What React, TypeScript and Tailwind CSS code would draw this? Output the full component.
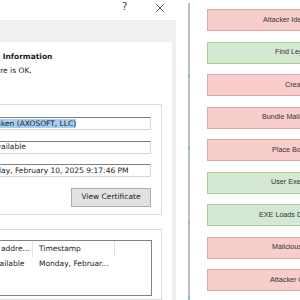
import React from "react";

const boxes = [
  { label: "Attacker Identifies Target", color: "red", pl: "pl-[55px]" },
  { label: "Find Legitimate Signed EXE", color: "green", pl: "pl-[67px]" },
  { label: "Create Malicious DLL", color: "red", pl: "pl-[77px]" },
  { label: "Bundle Malicious DLL with EXE", color: "red", pl: "pl-[54px]" },
  { label: "Place Both Files Together", color: "red", pl: "pl-[64px]" },
  { label: "User Executes EXE", color: "green", pl: "pl-[63px]" },
  { label: "EXE Loads DLL (Sideloading)", color: "green", pl: "pl-[51px]" },
  { label: "Malicious Code Executes", color: "red", pl: "pl-[64px]" },
  { label: "Attacker Gains Control", color: "red", pl: "pl-[62px]" },
];

export default function App() {
  return (
    <div className="relative flex w-[300px] h-[300px] overflow-hidden bg-white font-['DejaVu_Sans',sans-serif] text-[#1a1a1a]">
      {/* Left: dialog */}
      <div className="w-[188px] shrink-0 flex flex-col">
        <div className="h-[20px] w-[176px] flex items-start shrink-0">
          <span className="ml-[122px] mt-[1px] text-[10px] leading-[12px] text-[#444]">?</span>
          <svg className="ml-[29px] mt-[4px]" width="8" height="8" viewBox="0 0 8 8">
            <path d="M0.5 0.5 L7.5 7.5 M7.5 0.5 L0.5 7.5" stroke="#555" strokeWidth="1" fill="none" />
          </svg>
        </div>
        <div className="w-[176px] flex-1 bg-[#f0f0f0] pt-[22px]">
          <div className="w-[172px] h-full bg-white flex flex-col text-[7.5px] leading-[12px]">
            <div className="pt-[9px] whitespace-nowrap">
              <div className="ml-[-72px] font-bold">Digital Signature Information</div>
              <div className="ml-[-71px] mt-[2px]">This digital signature is OK.</div>
            </div>
            <div className="mt-[27px] ml-[-100px] w-[262px] shrink-0 border border-[#dcdcdc] pt-[12px] pr-[10px] pb-[7.5px] flex flex-col gap-[10.5px]">
              <div className="h-[13px] border border-[#d6d6d6] border-t-[#7f7f7f] flex items-center whitespace-nowrap overflow-hidden">
                <span className="ml-[75.5px] bg-[#a6cdf2] leading-[9px]">GitKraken (AXOSOFT, LLC)</span>
              </div>
              <div className="h-[13px] border border-[#d6d6d6] border-t-[#7f7f7f] flex items-center whitespace-nowrap overflow-hidden">
                <span className="ml-[74.5px]">Not available</span>
              </div>
              <div className="h-[13px] border border-[#d6d6d6] border-t-[#7f7f7f] flex items-center whitespace-nowrap overflow-hidden">
                <span className="ml-[78.5px]">Monday, February 10, 2025 9:17:46 PM</span>
              </div>
              <div className="self-end w-[80px] h-[19px] border border-[#adadad] bg-[#e1e1e1] flex items-center justify-center whitespace-nowrap">
                View Certificate
              </div>
            </div>
            <div className="mt-[14px] ml-[-100px] w-[262px] flex-1 border border-[#dcdcdc] pt-[10px] pr-[9px] pl-[40px]">
              <div className="h-[56px] border border-[#828282] flex flex-col whitespace-nowrap">
                <div className="flex h-[16px] items-stretch shrink-0">
                  <div className="w-[11px]" />
                  <div className="w-[80px] border-r border-[#e3e3e3] pl-[22px] flex items-center overflow-hidden">E-mail addre...</div>
                  <div className="w-[82px] border-r border-[#e3e3e3] pl-[6px] flex items-center overflow-hidden">Timestamp</div>
                  <div className="flex-1" />
                </div>
                <div className="flex h-[13px] items-center shrink-0">
                  <div className="w-[11px]" />
                  <div className="w-[80px] pl-[22px] overflow-hidden">Not available</div>
                  <div className="w-[82px] pl-[6px] overflow-hidden">Monday, Februar...</div>
                </div>
              </div>
            </div>
          </div>
        </div>
      </div>

      {/* Divider */}
      <div className="w-[2px] shrink-0 mt-[3px] bg-[#bdbdbd]" />

      {/* Right: diagram */}
      <div className="flex-1 pl-[17px] pt-[9px] flex flex-col gap-[10.5px] font-['Liberation_Sans',Arial,sans-serif]">
        {boxes.map((b) => (
          <div
            key={b.label}
            className={
              "h-[22px] w-[200px] shrink-0 border flex items-center whitespace-nowrap text-[7.2px] text-[#333] " +
              b.pl +
              (b.color === "red" ? " bg-[#f8cecc] border-[#e3a4a2]" : " bg-[#d5e8d4] border-[#aacf98]")
            }
          >
            {b.label}
          </div>
        ))}
      </div>

      {/* connector marks on divider */}
      <div className="absolute left-[188px] top-[74px] w-[2px] h-[3px] bg-[#6cc3ec]" />
      <div className="absolute left-[188px] top-[147px] w-[2px] h-[3px] bg-[#6cc3ec]" />
      <div className="absolute left-[188px] top-[222px] w-[2px] h-[3px] bg-[#6cc3ec]" />
      <div className="absolute left-[188px] top-[296px] w-[2px] h-[3px] bg-[#6cc3ec]" />
    </div>
  );
}
